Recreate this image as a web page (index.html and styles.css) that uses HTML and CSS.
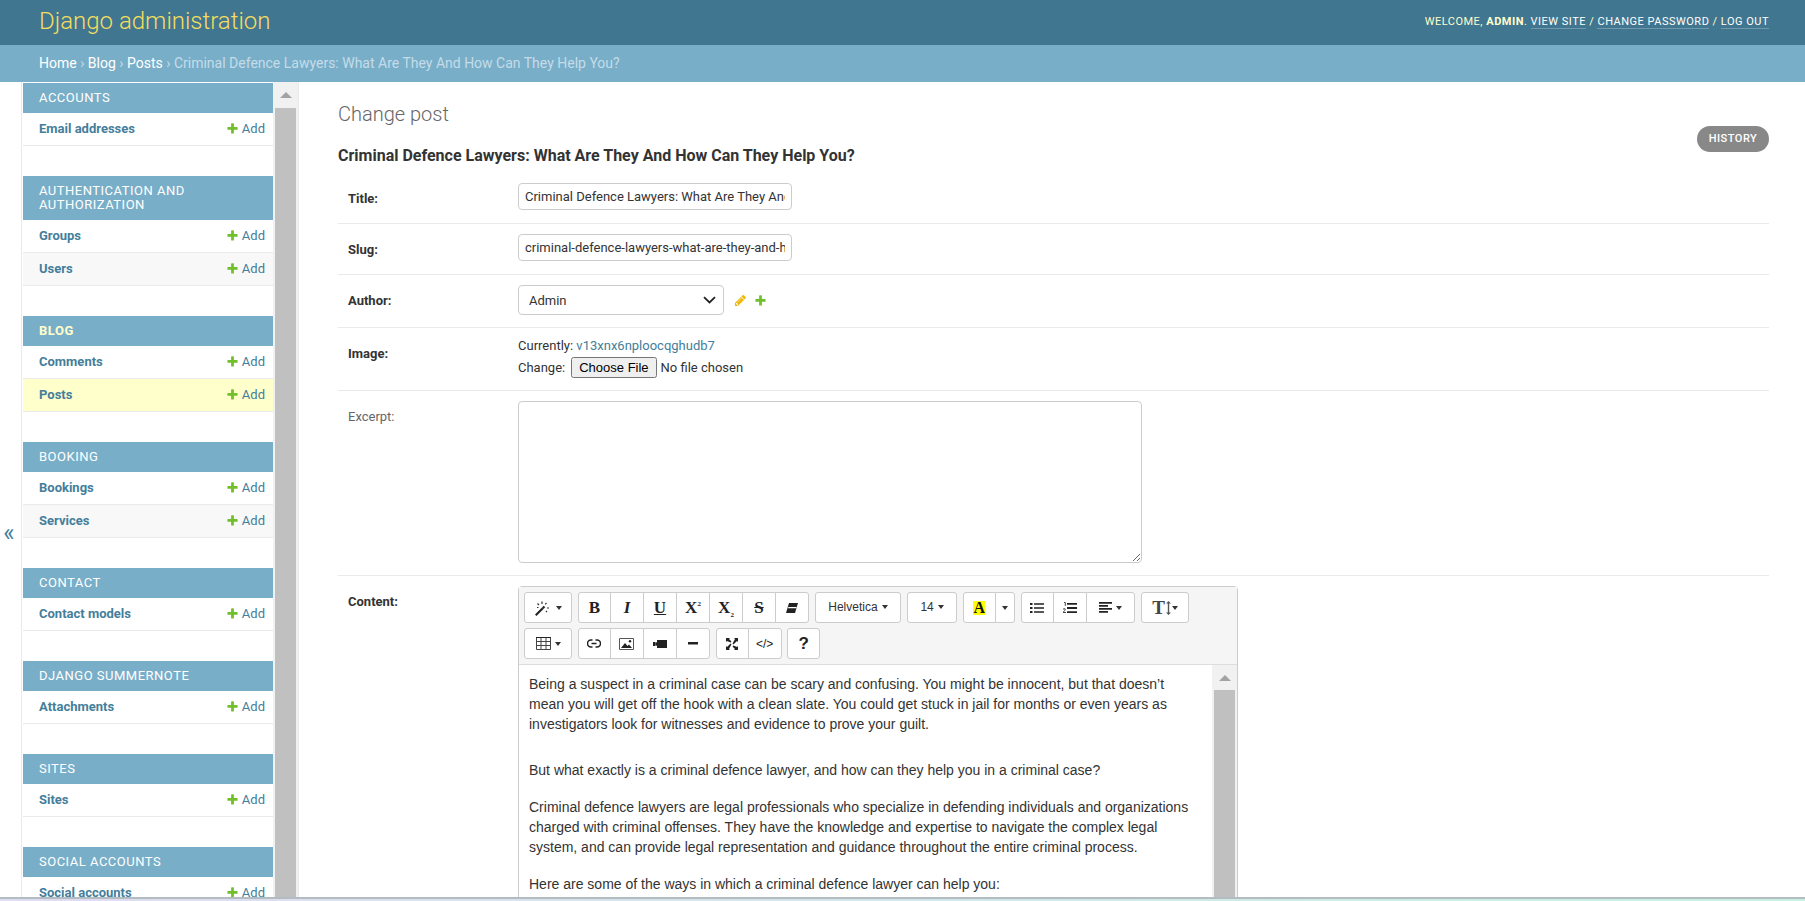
FILE: index.html
```html
<!DOCTYPE html>
<html lang="en">
<head>
<meta charset="utf-8">
<title>Change post | Django site admin</title>
<link rel="stylesheet" href="styles.css">
</head>
<body>
<svg class="defs" width="0" height="0" aria-hidden="true">
  <symbol id="plus" viewBox="0 0 1792 1792"><path d="M1600 796v192q0 40-28 68t-68 28h-416v416q0 40-28 68t-68 28h-192q-40 0-68-28t-28-68v-416h-416q-40 0-68-28t-28-68v-192q0-40 28-68t68-28h416v-416q0-40 28-68t68-28h192q40 0 68 28t28 68v416h416q40 0 68 28t28 68z"/></symbol>
  <symbol id="pencil" viewBox="0 0 1792 1792"><path d="M491 1536l91-91-235-235-91 91v107h128v128h107zm523-928q0-22-22-22-10 0-17 7l-542 542q-7 7-7 17 0 22 22 22 10 0 17-7l542-542q7-7 7-17zm-54-192l416 416-832 832h-416v-416zm683 96q0 53-37 90l-166 166-416-416 166-165q36-38 90-38 53 0 91 38l235 234q37 39 37 91z"/></symbol>
</svg>
<header class="topbar">
  <a class="brand" href="#">Django administration</a>
  <div class="user-tools">Welcome, <strong>admin</strong>. <a href="#">View site</a> / <a href="#">Change password</a> / <a href="#">Log out</a></div>
</header>
<nav class="crumbs"><a href="#">Home</a> › <a href="#">Blog</a> › <a href="#">Posts</a> › Criminal Defence Lawyers: What Are They And How Can They Help You?</nav>
<div class="shell">
  <aside class="side">
    <button class="toggle" type="button">«</button>
    <div class="modules">
      <section class="module">
        <h3 class="caption">Accounts</h3>
        <div class="row"><a class="name" href="#">Email addresses</a><a class="add" href="#"><svg class="ic-plus"><use href="#plus"/></svg>Add</a></div>
      </section>
      <section class="module">
        <h3 class="caption">Authentication and Authorization</h3>
        <div class="row"><a class="name" href="#">Groups</a><a class="add" href="#"><svg class="ic-plus"><use href="#plus"/></svg>Add</a></div>
        <div class="row alt"><a class="name" href="#">Users</a><a class="add" href="#"><svg class="ic-plus"><use href="#plus"/></svg>Add</a></div>
      </section>
      <section class="module">
        <h3 class="caption current">Blog</h3>
        <div class="row"><a class="name" href="#">Comments</a><a class="add" href="#"><svg class="ic-plus"><use href="#plus"/></svg>Add</a></div>
        <div class="row now"><a class="name" href="#">Posts</a><a class="add" href="#"><svg class="ic-plus"><use href="#plus"/></svg>Add</a></div>
      </section>
      <section class="module">
        <h3 class="caption">Booking</h3>
        <div class="row"><a class="name" href="#">Bookings</a><a class="add" href="#"><svg class="ic-plus"><use href="#plus"/></svg>Add</a></div>
        <div class="row alt"><a class="name" href="#">Services</a><a class="add" href="#"><svg class="ic-plus"><use href="#plus"/></svg>Add</a></div>
      </section>
      <section class="module">
        <h3 class="caption">Contact</h3>
        <div class="row"><a class="name" href="#">Contact models</a><a class="add" href="#"><svg class="ic-plus"><use href="#plus"/></svg>Add</a></div>
      </section>
      <section class="module">
        <h3 class="caption">Django Summernote</h3>
        <div class="row"><a class="name" href="#">Attachments</a><a class="add" href="#"><svg class="ic-plus"><use href="#plus"/></svg>Add</a></div>
      </section>
      <section class="module">
        <h3 class="caption">Sites</h3>
        <div class="row"><a class="name" href="#">Sites</a><a class="add" href="#"><svg class="ic-plus"><use href="#plus"/></svg>Add</a></div>
      </section>
      <section class="module">
        <h3 class="caption">Social accounts</h3>
        <div class="row"><a class="name" href="#">Social accounts</a><a class="add" href="#"><svg class="ic-plus"><use href="#plus"/></svg>Add</a></div>
      </section>
    </div>
    <div class="scroll side-scroll"><span class="scroll-up"></span><span class="scroll-thumb"></span></div>
  </aside>
  <main class="main">
    <div class="title-row">
      <div>
        <h1 class="page-title">Change post</h1>
        <h2 class="object-title">Criminal Defence Lawyers: What Are They And How Can They Help You?</h2>
      </div>
      <a class="history" href="#">History</a>
    </div>
    <form class="form" action="#">
      <div class="form-row r-title">
        <label class="req" for="f-title">Title:</label>
        <input class="text" id="f-title" type="text" value="Criminal Defence Lawyers: What Are They And How Can They Help You?">
      </div>
      <div class="form-row r-slug">
        <label class="req" for="f-slug">Slug:</label>
        <input class="text" id="f-slug" type="text" value="criminal-defence-lawyers-what-are-they-and-how-can-they-help-you">
      </div>
      <div class="form-row r-author">
        <label class="req" for="f-author">Author:</label>
        <div class="select-wrap">
          <select class="select" id="f-author"><option>Admin</option></select>
          <svg class="chevron" width="13" height="8" viewBox="0 0 13 8"><path d="M1 1.200 6.500 6.500 12 1.200" fill="none" stroke="#222" stroke-width="1.800"/></svg>
        </div>
        <a class="rel" href="#"><svg class="ic-pencil"><use href="#pencil"/></svg></a>
        <a class="rel" href="#"><svg class="ic-plus"><use href="#plus"/></svg></a>
      </div>
      <div class="form-row r-image">
        <label class="req" for="f-image">Image:</label>
        <div class="file-box">
          <div>Currently: <a href="#">v13xnx6nploocqghudb7</a></div>
          <div class="file-line">Change: <input class="file" id="f-image" type="file"></div>
        </div>
      </div>
      <div class="form-row r-excerpt">
        <label class="opt" for="f-excerpt">Excerpt:</label>
        <textarea class="area" id="f-excerpt"></textarea>
      </div>
      <div class="form-row r-content">
        <label class="req">Content:</label>
        <div class="editor">
          <div class="toolbar">
            <div class="tool-line">
              <div class="group"><button class="btn w-49" type="button">
                <svg width="18" height="16" viewBox="0 0 18 16"><path d="M1 14.500 8 7.500l1.500 1.500-7 7z" fill="#222"/><path d="M8 7.500 9.700 5.800l1.500 1.500L9.500 9z" fill="#222"/><path d="M8 1.500v2.500M3.500 3.500 5 5M12.500 3l-1.300 1.300M13 8h2M3 7.500h1.500M12 11l1 1" stroke="#333" stroke-width="1.200" fill="none"/></svg><i class="caret"></i></button></div>
              <div class="group">
                <button class="btn w-33 glyph" type="button"><span>B</span></button>
                <button class="btn w-33 glyph it" type="button"><span>I</span></button>
                <button class="btn w-33 glyph ul" type="button"><span>U</span></button>
                <button class="btn w-33 glyph" type="button"><span>X<sup class="tiny">2</sup></span></button>
                <button class="btn w-33 glyph" type="button"><span>X<sub class="tiny">2</sub></span></button>
                <button class="btn w-33 glyph st" type="button"><span>S</span></button>
                <button class="btn w-33" type="button"><svg width="14" height="12" viewBox="0 0 14 12"><path d="M4 1h9l-3 10H1z" fill="#222"/><path d="M3.400 5h8.300l-.4 1.300H3z" fill="#fff"/></svg></button>
              </div>
              <div class="group"><button class="btn w-87 word" type="button">Helvetica<i class="caret"></i></button></div>
              <div class="group"><button class="btn w-51 word" type="button">14<i class="caret"></i></button></div>
              <div class="group">
                <button class="btn w-33 color" type="button"><span class="hl">A</span></button>
                <button class="btn w-20" type="button"><i class="caret"></i></button>
              </div>
              <div class="group">
                <button class="btn w-33" type="button"><svg width="14" height="12" viewBox="0 0 14 12"><path d="M0 1h2.500v2H0zM0 5h2.500v2H0zM0 9h2.500v2H0zM4 1.300h10v1.500H4zM4 5.300h10v1.500H4zM4 9.300h10v1.500H4z" fill="#222"/></svg></button>
                <button class="btn w-33" type="button"><svg width="14" height="12" viewBox="0 0 14 12"><path d="M4 1h10v1.800H4zM4 5.100h10v1.800H4zM4 9.200h10V11H4z" fill="#222"/><path d="M1 .5h1.300v3.400M0 7.200q1.300-1 2.200-.3.500 1-2.200 3.600h3" stroke="#333" stroke-width=".9" fill="none"/></svg></button>
                <button class="btn w-48" type="button"><svg width="13" height="11" viewBox="0 0 13 11"><path d="M0 0h13v1.700H0zM0 3h9v1.700H0zM0 6h13v1.700H0zM0 9h9v1.700H0z" fill="#222"/></svg><i class="caret"></i></button>
              </div>
              <div class="group"><button class="btn w-49 tight" type="button"><span class="tt">T</span><svg width="5" height="14" viewBox="0 0 5 14"><path d="M2.500 0 5 2.500H3.200v9H5L2.500 14 0 11.500h1.800v-9H0z" fill="#555"/></svg><i class="caret"></i></button></div>
            </div>
            <div class="tool-line">
              <div class="group"><button class="btn w-49" type="button"><svg width="15" height="13" viewBox="0 0 15 13"><path d="M.5.500h14v12H.5zM.5 4.500h14M.5 8.500h14M5 .500v12M10 .500v12" stroke="#444" fill="none"/><path d="M0 0h15v1H0z" fill="#222"/></svg><i class="caret"></i></button></div>
              <div class="group">
                <button class="btn w-33" type="button"><svg width="14" height="9" viewBox="0 0 14 9"><path d="M5.500 1H4a3.500 3.500 0 0 0 0 7h1.500M8.500 1H10a3.500 3.500 0 0 1 0 7H8.500M4.500 4.500h5" stroke="#222" stroke-width="1.500" fill="none"/></svg></button>
                <button class="btn w-33" type="button"><svg width="15" height="12" viewBox="0 0 15 12"><path d="M.5.500h14v11H.5z" stroke="#555" fill="none"/><path d="M2 10 6 5l2.500 3L10 6.500 13 10z" fill="#222"/><circle cx="11" cy="3.300" r="1.200" fill="#222"/></svg></button>
                <button class="btn w-33" type="button"><svg width="14" height="8" viewBox="0 0 14 8"><path d="M4 0h10v8H4zM0 2h2.500v4H0z" fill="#222"/><path d="M2.500 3 4 2v4L2.500 5z" fill="#222"/></svg></button>
                <button class="btn w-33" type="button"><svg width="10" height="3" viewBox="0 0 10 3"><path d="M0 0h10v2.500H0z" fill="#222"/></svg></button>
              </div>
              <div class="group">
                <button class="btn w-33" type="button"><svg width="12" height="12" viewBox="0 0 12 12"><path d="M0 0h4L3 1l2.500 2.500-.9.900L1 3 0 4zM12 0v4l-1-1-3.600 3.600-.9-.9L9 1 8 0zM0 12V8l1 1 3.600-3.600.9.900L3 11l1 1zM12 12H8l1-1-2.500-2.500.9-.9L11 9l1-1z" fill="#222"/></svg></button>
                <button class="btn w-33 code" type="button">&lt;/&gt;</button>
              </div>
              <div class="group"><button class="btn w-33 help" type="button">?</button></div>
            </div>
          </div>
          <div class="edit-body">
            <div class="note">
              <p>Being a suspect in a criminal case can be scary and confusing. You might be innocent, but that doesn’t mean you will get off the hook with a clean slate. You could get stuck in jail for months or even years as investigators look for witnesses and evidence to prove your guilt.</p>
              <p class="gap-big">But what exactly is a criminal defence lawyer, and how can they help you in a criminal case?</p>
              <p>Criminal defence lawyers are legal professionals who specialize in defending individuals and organizations charged with criminal offenses. They have the knowledge and expertise to navigate the complex legal system, and can provide legal representation and guidance throughout the entire criminal process.</p>
              <p>Here are some of the ways in which a criminal defence lawyer can help you:</p>
            </div>
            <div class="scroll note-scroll"><span class="scroll-up"></span><span class="scroll-thumb"></span></div>
          </div>
        </div>
      </div>
    </form>
  </main>
</div>
<div class="strip"></div>
</body>
</html>
```

FILE: styles.css
```css
* { box-sizing: border-box; }
html, body { height: 100%; }
body {
  margin: 0;
  height: 901px;
  overflow: hidden;
  display: flex;
  flex-direction: column;
  font-family: Roboto, "Liberation Sans", sans-serif;
  font-size: 14px;
  color: #333;
  background: #fff;
}
a { text-decoration: none; color: #447e9b; }
.defs { position: absolute; }

.topbar {
  flex: none;
  height: 45px;
  padding: 0 36px 3px 39px;
  display: flex;
  align-items: center;
  justify-content: space-between;
  background: #417690;
}
.brand { font-size: 24px; font-weight: 300; color: #f5dd5d; }
.user-tools {
  font-size: 11px;
  letter-spacing: .5px;
  text-transform: uppercase;
  color: #ffc;
}
.user-tools a { color: #fff; border-bottom: 1px solid rgba(255,255,255,.25); }
.user-tools strong { font-weight: 700; }

.crumbs {
  flex: none;
  height: 37px;
  padding: 0 39px;
  background: #79aec8;
  color: #c4dce8;
  font-size: 14px;
  line-height: 37px;
}
.crumbs a { color: #fff; }

.shell { flex: 1; min-height: 0; display: flex; overflow: hidden; }

.side { flex: none; width: 299px; display: flex; overflow: hidden; border-right: 1px solid #eaeaea; }
.toggle {
  flex: none;
  width: 22px;
  padding: 83px 3px 0 0;
  border: 0;
  border-right: 1px solid #eaeaea;
  background: #fff;
  color: #447e9b;
  font: 24px Roboto, sans-serif;
}
.modules { flex: none; width: 250px; margin-left: 1px; padding-top: 1px; }
.module { margin-bottom: 30px; }
.caption {
  margin: 0;
  padding: 8px 16px;
  background: #79aec8;
  color: #fff;
  font-size: 13px;
  font-weight: 400;
  line-height: 14px;
  letter-spacing: .5px;
  text-transform: uppercase;
}
.caption.current { color: #ffc; font-weight: 700; }
.row {
  height: 33px;
  padding: 0 8px 2px 16px;
  display: flex;
  align-items: center;
  justify-content: space-between;
  border-bottom: 1px solid #eaeaea;
  font-size: 13px;
}
.row.alt { background: #f8f8f8; }
.row.now { background: #ffc; }
.name { font-weight: 700; }
.add { display: flex; align-items: center; }
.ic-plus { width: 13px; height: 13px; margin-right: 3px; fill: #70bf2b; }

.scroll { flex: none; display: flex; flex-direction: column; align-items: center; background: #f1f1f1; }
.side-scroll { width: 25px; }
.side-scroll .scroll-thumb { margin-top: 10px; }
.note-scroll { width: 25px; }
.scroll-up {
  flex: none;
  width: 0;
  height: 0;
  margin-top: 10px;
  border-left: 6px solid transparent;
  border-right: 6px solid transparent;
  border-bottom: 6px solid #a3a3a3;
}
.scroll-thumb { flex: 1; width: 21px; margin-top: 9px; background: #c0c0c0; }

.main { flex: 1; min-width: 0; padding: 20px 36px 0 39px; overflow: hidden; }
.title-row { display: flex; justify-content: space-between; }
.page-title { margin: 0 0 20px; font-size: 20px; line-height: 24px; font-weight: 300; color: #666; }
.object-title { margin: 0 0 7px; font-size: 16px; line-height: 20px; font-weight: 700; color: #333; }
.history {
  align-self: flex-start;
  margin-top: 24px;
  width: 72px;
  height: 26px;
  padding-bottom: 1px;
  display: flex;
  align-items: center;
  justify-content: center;
  border-radius: 15px;
  background: #888;
  color: #fff;
  font-size: 11px;
  font-weight: 500;
  letter-spacing: .5px;
  text-transform: uppercase;
}

.form-row {
  display: flex;
  padding: 10px 9px 13px 10px;
  border-bottom: 1px solid #eaeaea;
  font-size: 13px;
}
.form-row label { flex: none; width: 170px; line-height: 16px; }
.req { font-weight: 700; color: #333; }
.opt { font-weight: 400; color: #666; }
.r-title label, .r-slug label { padding-top: 8px; }
.r-author { padding: 10px 9px 12px 10px; align-items: center; }
.r-author label { padding-top: 1px; }
.r-image { padding: 10px 9px 12px 10px; }
.r-image label { padding-top: 8px; }
.r-excerpt { padding: 10px 9px 12px 10px; }
.r-content { padding: 10px 9px 0 10px; border-bottom: 0; }
.r-content label { padding-top: 8px; }
.r-excerpt label { padding-top: 8px; }

.text {
  width: 274px;
  height: 27px;
  padding: 5px 6px;
  border: 1px solid #ccc;
  border-radius: 4px;
  font: 13px Roboto, sans-serif;
  color: #333;
}
.select-wrap { position: relative; display: flex; }
.select {
  width: 206px;
  height: 30px;
  padding: 0 10px;
  border: 1px solid #ccc;
  border-radius: 4px;
  background: #fff;
  font: 13px Roboto, sans-serif;
  color: #333;
  appearance: none;
}
.chevron { position: absolute; top: 11px; right: 8px; pointer-events: none; }
.rel { display: flex; margin-left: 10px; }
.r-author .rel .ic-plus, .ic-pencil { width: 13px; height: 13px; margin: 0; }
.ic-pencil { fill: #efb80b; }
.r-author .rel + .rel { margin-left: 7px; }
.file-box { line-height: 16px; }
.file-line { display: flex; align-items: center; gap: 6px; margin-top: 3px; }
.file { font: 13px Roboto, sans-serif; color: #333; height: 21px; }
.area {
  display: block;
  width: 624px;
  height: 162px;
  border: 1px solid #ccc;
  border-radius: 4px;
  font: 13px Roboto, sans-serif;
}

.editor { flex: none; width: 720px; border: 1px solid #ccc; border-radius: 4px; }
.toolbar { padding: 0 5px 5px; background: #f5f5f5; border-bottom: 1px solid #ddd; }
.tool-line { display: flex; gap: 5.600px; padding-top: 5px; }
.group { display: flex; }
.btn {
  height: 31px;
  padding: 0;
  display: flex;
  align-items: center;
  justify-content: center;
  gap: 4px;
  border: 1px solid #ccc;
  margin-left: -1px;
  background: #fff;
  color: #333;
  font: 12px "Liberation Sans", Arial, sans-serif;
}
.group .btn:first-child { margin-left: 0; border-radius: 3px 0 0 3px; }
.group .btn:last-child { border-radius: 0 3px 3px 0; }
.group .btn:only-child { border-radius: 3px; }
.w-20 { width: 20.400px; }
.w-33 { width: 34px; }
.w-48 { width: 49.400px; }
.w-49 { width: 48.400px; }
.w-51 { width: 50.400px; }
.w-87 { width: 86.700px; }
.group .w-33:first-child { width: 33px; }
.tight { gap: 1px; }
.glyph { font: 700 17px "Liberation Serif", serif; color: #222; gap: 0; }
.it { font-style: italic; }
.ul span { text-decoration: underline; }
.st span { text-decoration: line-through; }
.tiny { font-size: 7px; line-height: 0; }
.caret {
  width: 0;
  height: 0;
  border-left: 3.500px solid transparent;
  border-right: 3.500px solid transparent;
  border-top: 4px solid #333;
}
.word { font-size: 12px; padding-bottom: 2px; }
.hl {
  width: 12px;
  height: 14px;
  background: #ff0;
  color: #111;
  font: 700 16px/14px "Liberation Serif", serif;
  text-align: center;
}
.tt { font: 700 19px/16px "Liberation Serif", serif; color: #444; }
.code { font-size: 12px; color: #222; }
.help { font: 700 17px "Liberation Sans", sans-serif; color: #222; }

.edit-body { display: flex; height: 600px; background: #fff; }
.note {
  flex: 1;
  min-width: 0;
  padding: 9px 19px 0 10px;
  font: 14px/20px "Liberation Sans", Arial, sans-serif;
  color: #333;
}
.note p { margin: 0 0 17px; }
.note p:first-child { margin-bottom: 26px; }

.strip {
  position: fixed;
  left: 0;
  right: 0;
  bottom: 0;
  height: 4px;
  border-top: 2px solid #b3bcc0;
  background: linear-gradient(90deg, #e0dcf2, #c6f2e2);
}
```
